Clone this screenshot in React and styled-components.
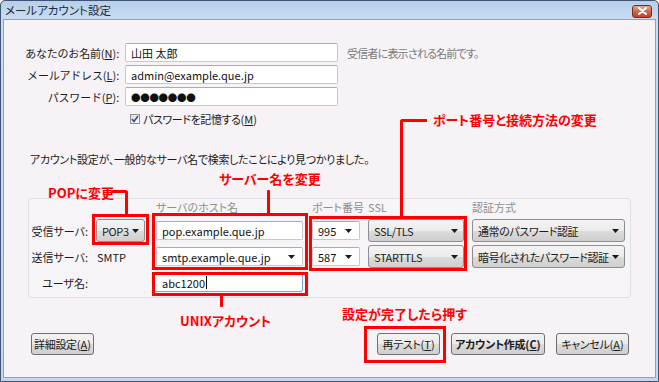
import React from 'react'
import styled, { createGlobalStyle } from 'styled-components'

const GlobalStyle = createGlobalStyle`
  html, body {
    margin: 0;
    padding: 0;
    background: #ffffff;
  }
  * {
    box-sizing: border-box;
  }
`

function Arrow() {
  return (
    <svg width="7" height="4" viewBox="0 0 7 4">
      <path d="M0 0 H7 L3.5 4 Z" fill="#1a1a1a" />
    </svg>
  )
}

function Key({ k }) {
  return (
    <KeyText>
      (<u>{k}</u>)
    </KeyText>
  )
}

function App() {
  return (
    <>
      <GlobalStyle />
      <Window>
        <TitleBar>
          <Title>メールアカウント設定</Title>
          <CloseButton>
            <svg width="9" height="8" viewBox="0 0 9 8">
              <path d="M1 1 L8 7 M8 1 L1 7" stroke="#ffffff" strokeWidth="2.2" strokeLinecap="round" />
            </svg>
          </CloseButton>
        </TitleBar>

        <Panel>
          <IdentityGrid>
            <Label>あなたのお名前<Key k="N" />:</Label>
            <Field>山田 太郎</Field>
            <Hint>受信者に表示される名前です。</Hint>

            <Label>メールアドレス<Key k="L" />:</Label>
            <Field>admin@example.que.jp</Field>
            <span />

            <Label>パスワード<Key k="P" />:</Label>
            <Field $dots>●●●●●●●</Field>
            <span />

            <span />
            <CheckRow>
              <CheckBox>
                <svg width="8" height="8" viewBox="0 0 8 8">
                  <path d="M1 4 L3 6.5 L7 1" stroke="#2b4f9e" strokeWidth="1.6" fill="none" />
                </svg>
              </CheckBox>
              <span>パスワードを記憶する<Key k="M" /></span>
            </CheckRow>
          </IdentityGrid>

          <Message>アカウント設定が、一般的なサーバ名で検索したことにより見つかりました。</Message>

          <ServerGroup>
            <span />
            <span />
            <ColumnHead>サーバのホスト名</ColumnHead>
            <ColumnHead>ポート番号</ColumnHead>
            <ColumnHead>SSL</ColumnHead>
            <ColumnHead>認証方式</ColumnHead>

            <RowLabel>受信サーバ:</RowLabel>
            <Select $w={49}>POP3<Arrow /></Select>
            <Field $w={147}>pop.example.que.jp</Field>
            <Combo $w={48}>995<Arrow /></Combo>
            <Select $w={96}>SSL/TLS<Arrow /></Select>
            <Select $w={153}>通常のパスワード認証<Arrow /></Select>

            <RowLabel>送信サーバ:</RowLabel>
            <PlainText>SMTP</PlainText>
            <Combo $w={147}>smtp.example.que.jp<Arrow /></Combo>
            <Combo $w={48}>587<Arrow /></Combo>
            <Select $w={96}>STARTTLS<Arrow /></Select>
            <Select $w={153}>暗号化されたパスワード認証<Arrow /></Select>

            <RowLabel>ユーザ名:</RowLabel>
            <span />
            <UserField>abc1200<Caret /></UserField>
          </ServerGroup>

          <ButtonBar>
            <Button $w={63}>詳細設定<Key k="A" /></Button>
            <ButtonGroup>
              <Button $w={63}>再テスト<Key k="T" /></Button>
              <Button $w={94} $bold>アカウント作成<Key k="C" /></Button>
              <Button $w={73}>キャンセル<Key k="A" /></Button>
            </ButtonGroup>
          </ButtonBar>
        </Panel>

        {/* annotation overlay */}
        <RedBox $x={91} $y={213} $w={57} $h={31} />
        <RedBox $x={151} $y={212} $w={156} $h={57} />
        <RedBox $x={308} $y={215} $w={158} $h={55} />
        <RedBox $x={151} $y={271} $w={156} $h={24} />
        <RedBox $x={363} $y={325} $w={82} $h={37} />

        <Elbow $x={110} $y={189} $w={17} $h={25} $side="right" />
        <VLine $x={266} $y={189} $h={24} />
        <Elbow $x={399} $y={118} $w={27} $h={98} $side="left" />
        <VLine $x={219} $y={294} $h={12} />

        <Callout $x={47} $y={183}>POPに変更</Callout>
        <Callout $x={218} $y={169}>サーバー名を変更</Callout>
        <Callout $x={432} $y={110}>ポート番号と接続方法の変更</Callout>
        <Callout $x={179} $y={311}>UNIXアカウント</Callout>
        <Callout $x={341} $y={304}>設定が完了したら押す</Callout>
      </Window>
    </>
  )
}

export default App

const Window = styled.div`
  position: relative;
  width: 659px;
  height: 382px;
  border: 1px solid #3f5470;
  border-radius: 5px 5px 0 0;
  background: linear-gradient(#b7cfeb, #c9dcf1 18px, #c3d7ef);
  display: flex;
  flex-direction: column;
  font-family: "Noto Sans CJK JP", sans-serif;
  font-feature-settings: "palt" 1;
  font-size: 11px;
  color: #1b1b1b;
  overflow: hidden;
`

const KeyText = styled.span`
  font-feature-settings: normal;
  letter-spacing: 0;
`

const TitleBar = styled.div`
  height: 18px;
  display: flex;
  align-items: center;
  justify-content: space-between;
  padding: 0 6px 0 4px;
`

const Title = styled.div`
  font-size: 11.5px;
  color: #1c2a3a;
`

const CloseButton = styled.div`
  width: 20px;
  height: 13px;
  margin-top: 2px;
  border: 1px solid #6e3024;
  border-radius: 3px;
  background: linear-gradient(#e9a692, #d2644a 50%, #c1412a);
  display: flex;
  align-items: center;
  justify-content: center;
`

const Panel = styled.div`
  flex: 1;
  margin: 0 2px 3px 2px;
  border: 1px solid #8da2bd;
  background: #f6f2f6;
  padding-top: 23px;
  display: flex;
  flex-direction: column;
`

const IdentityGrid = styled.div`
  display: grid;
  grid-template-columns: 115px 213px auto;
  grid-auto-rows: 19px;
  column-gap: 6px;
  row-gap: 3px;
  align-items: center;
`

const Label = styled.div`
  text-align: right;
  white-space: nowrap;
  font-feature-settings: normal;
  letter-spacing: -0.2px;
`

const Field = styled.div`
  width: ${p => (p.$w ? `${p.$w}px` : '100%')};
  height: 19px;
  background: #ffffff;
  border: 1px solid #c5c8cf;
  border-top-color: #a9acb4;
  border-radius: 2px;
  padding: 0 5px;
  display: flex;
  align-items: center;
  white-space: nowrap;
  color: #111;
  font-size: ${p => (p.$dots ? '9.5px' : '11px')};
  letter-spacing: ${p => (p.$dots ? '-0.3px' : '0')};
  font-feature-settings: ${p => (p.$dots ? 'normal' : '"palt" 1')};
`

const Hint = styled.div`
  margin-left: 3px;
  color: #7a7a7a;
  white-space: nowrap;
  letter-spacing: -0.8px;
`

const CheckRow = styled.div`
  display: flex;
  align-items: center;
  gap: 3px;
  padding-left: 5px;
  white-space: nowrap;
  letter-spacing: -0.4px;
`

const CheckBox = styled.div`
  width: 10px;
  height: 10px;
  border: 1px solid #8f8f8f;
  background: linear-gradient(135deg, #dcdcdc, #ffffff);
  display: flex;
  align-items: center;
  justify-content: center;
`

const Message = styled.div`
  margin-top: 24px;
  padding-left: 26px;
  line-height: 14px;
  white-space: nowrap;
  letter-spacing: -0.3px;
`

const ServerGroup = styled.div`
  margin: 32px 0 0 24px;
  width: 603px;
  height: 100px;
  border: 1px solid #dfdfe8;
  border-radius: 3px;
  background: #f7f4f8;
  padding-bottom: 3px;
  display: grid;
  grid-template-columns: 67px 60px 156px 56px 104px 153px;
  grid-template-rows: 17px 23px 23px 23px;
  row-gap: 3px;
  align-items: center;
`

const ColumnHead = styled.div`
  color: #8f8f8f;
  white-space: nowrap;
  margin-top: -1px;
`

const RowLabel = styled.div`
  text-align: right;
  padding-right: 8px;
  white-space: nowrap;
`

const PlainText = styled.div`
  padding-left: 1px;
`

const Select = styled.div`
  width: ${p => p.$w}px;
  height: 23px;
  border: 1px solid #8c8e91;
  border-radius: 3px;
  background: linear-gradient(#f4f4f4, #ebebeb 50%, #dcdcdc 51%, #cfcfcf);
  display: flex;
  align-items: center;
  justify-content: space-between;
  padding: 0 5px 0 5px;
  white-space: nowrap;
  letter-spacing: -0.4px;
`

const Combo = styled(Field)`
  justify-content: space-between;
  padding-right: 7px;
`

const UserField = styled(Field)`
  width: 150px;
  margin-left: -3px;
  padding-left: 8px;
  border-color: #7fa6d6;
`

const Caret = styled.span`
  display: inline-block;
  width: 1px;
  height: 13px;
  background: #000;
  margin-left: 1px;
`

const ButtonBar = styled.div`
  margin-top: 35px;
  padding: 0 26px 0 27px;
  display: flex;
  justify-content: space-between;
`

const ButtonGroup = styled.div`
  display: flex;
  gap: 11px;
`

const Button = styled.div`
  width: ${p => p.$w}px;
  height: 22px;
  border: 1px solid #707070;
  border-radius: 3px;
  background: linear-gradient(#f3f3f3, #ebebeb 50%, #dddddd 51%, #cfcfcf);
  display: flex;
  align-items: center;
  justify-content: center;
  white-space: nowrap;
  letter-spacing: -0.3px;
  font-weight: ${p => (p.$bold ? 700 : 400)};
`

const RedBox = styled.div`
  position: absolute;
  left: ${p => p.$x}px;
  top: ${p => p.$y}px;
  width: ${p => p.$w}px;
  height: ${p => p.$h}px;
  border: 3px solid #ff0000;
`

const Elbow = styled.div`
  position: absolute;
  left: ${p => p.$x}px;
  top: ${p => p.$y}px;
  width: ${p => p.$w}px;
  height: ${p => p.$h}px;
  border-top: 3px solid #ff0000;
  border-${p => p.$side}: 3px solid #ff0000;
  border-top-${p => p.$side}-radius: 3px;
`

const VLine = styled.div`
  position: absolute;
  left: ${p => p.$x}px;
  top: ${p => p.$y}px;
  width: 3px;
  height: ${p => p.$h}px;
  background: #ff0000;
  border-radius: 1px;
`

const Callout = styled.div`
  position: absolute;
  left: ${p => p.$x}px;
  top: ${p => p.$y}px;
  color: #ff0000;
  font-weight: 700;
  font-size: 13px;
  line-height: 17px;
  white-space: nowrap;
`
